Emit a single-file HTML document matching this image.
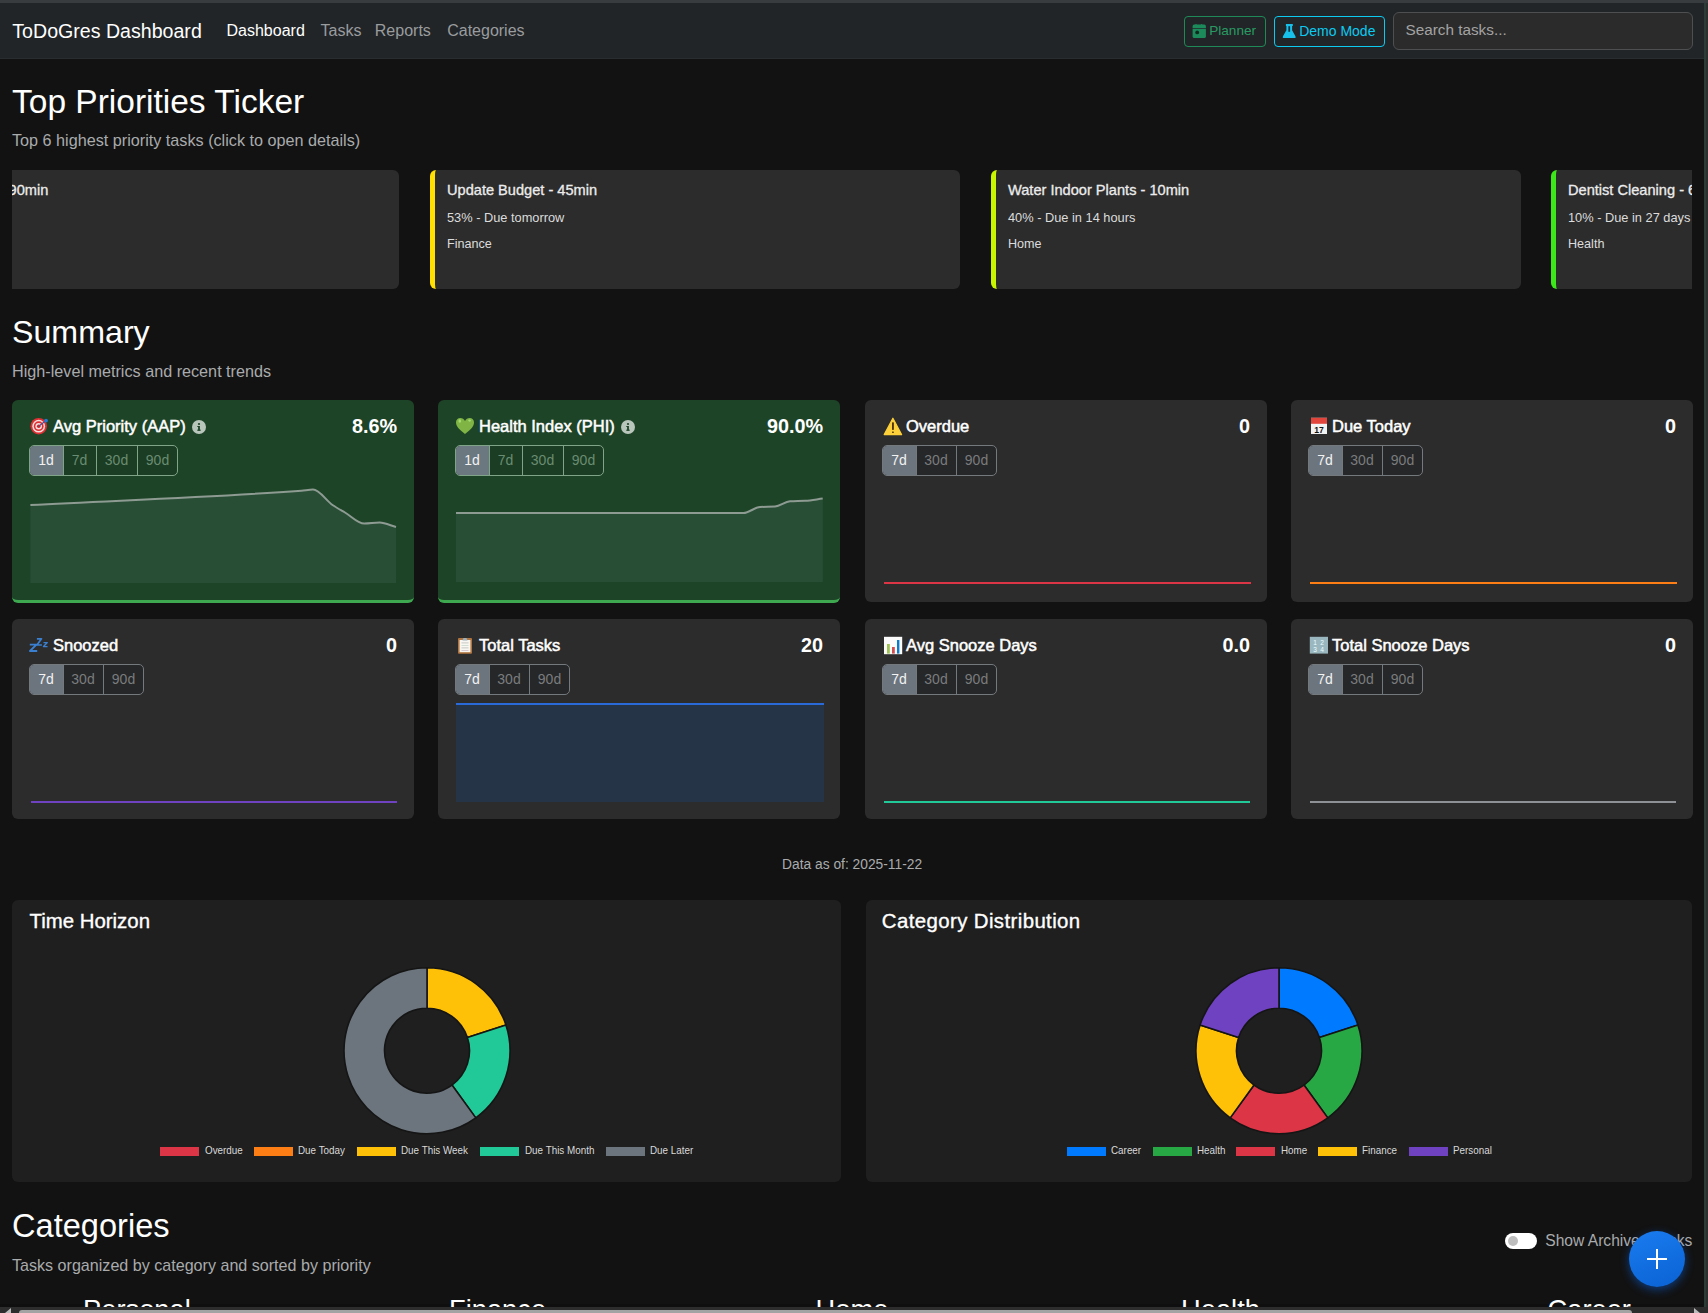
<!DOCTYPE html>
<html><head><meta charset="utf-8"><title>ToDoGres Dashboard</title>
<style>
html,body{margin:0;padding:0;}
body{width:1708px;height:1313px;overflow:hidden;position:relative;background:#121212;font-family:"Liberation Sans", sans-serif;}
.t{position:absolute;white-space:nowrap;line-height:1;font-family:"Liberation Sans", sans-serif;}
</style></head><body>
<div style="position:absolute;left:0px;top:0px;width:1708px;height:3px;background:#383c3e"></div>
<div style="position:absolute;left:0px;top:3px;width:1708px;height:56px;background:#212528"></div>
<div style="position:absolute;left:0px;top:58px;width:1708px;height:1px;background:#2a2d2f"></div>
<div class="t" style="left:12.3px;top:22.0px;font-size:19.6px;color:#fff;font-weight:normal;">ToDoGres Dashboard</div>
<div class="t" style="left:226.5px;top:22.7px;font-size:16px;color:#fff;font-weight:normal;">Dashboard</div>
<div class="t" style="left:320.5px;top:22.7px;font-size:16px;color:#9a9c9e;font-weight:normal;">Tasks</div>
<div class="t" style="left:374.8px;top:22.7px;font-size:16px;color:#9a9c9e;font-weight:normal;">Reports</div>
<div class="t" style="left:447.2px;top:22.7px;font-size:16px;color:#9a9c9e;font-weight:normal;">Categories</div>
<div style="position:absolute;left:1184px;top:16px;width:82px;height:31px;box-sizing:border-box;border:1px solid #1f8a58;border-radius:4px"></div>
<svg style="position:absolute;left:1192px;top:23px" width="15" height="16" viewBox="0 0 15 16"><path d="M0.6 5.2V3.2Q0.6 1.6 2.2 1.6H3Q4 0.6 5 1.6H8.6Q9.6 0.6 10.6 1.6H12.3Q13.9 1.6 13.9 3.2V5.2z" fill="#1d8a5c"/><path d="M0.6 6H13.9V13.4Q13.9 15 12.3 15H2.2Q0.6 15 0.6 13.4z" fill="#1d8a5c"/><circle cx="5.2" cy="9.4" r="1.9" fill="#0f2a1c"/></svg>
<div class="t" style="left:1209.2px;top:23.9px;font-size:13.6px;color:#2a9a63;font-weight:normal;">Planner</div>
<div style="position:absolute;left:1274px;top:16px;width:111px;height:31px;box-sizing:border-box;border:1.5px solid #0dcaf0;border-radius:4px"></div>
<svg style="position:absolute;left:1282px;top:23px" width="15" height="17" viewBox="0 0 15 17"><path d="M3.9 1.1H10.8V3.1H10.1V7.2L13.3 12.9Q14.4 15.1 12.2 15.1H2.2Q0 15.1 1.1 12.9L4.4 7.2V3.1H3.9z" fill="#16c0ea"/><rect x="6.4" y="3.2" width="1.7" height="5.6" fill="#0b2a3a"/></svg>
<div class="t" style="left:1299.2px;top:24.3px;font-size:14px;color:#0dcaf0;font-weight:normal;">Demo Mode</div>
<div style="position:absolute;left:1393px;top:12px;width:300px;height:38px;box-sizing:border-box;background:#2b2b2b;border:1px solid #4d4f51;border-radius:6px"></div>
<div class="t" style="left:1405.5px;top:22.2px;font-size:15.3px;color:#a3a3a3;font-weight:normal;">Search tasks...</div>
<div style="position:absolute;left:1703.5px;top:3px;width:2.5px;height:1304px;background:#2c3d37"></div>
<div style="position:absolute;left:1706px;top:3px;width:2px;height:1304px;background:#2e302f"></div>
<div class="t" style="left:12.0px;top:85.2px;font-size:33.5px;color:#fff;font-weight:normal;">Top Priorities Ticker</div>
<div class="t" style="left:12.0px;top:131.9px;font-size:16.2px;color:#a9abad;font-weight:normal;">Top 6 highest priority tasks (click to open details)</div>
<div style="position:absolute;left:12px;top:168px;width:1680px;height:124px;overflow:hidden">
<div style="position:absolute;left:-143px;top:2px;width:530px;height:119px;background:#2c2c2c;border-radius:6px;box-sizing:border-box;border-left:5px solid #ff7a00"></div>
<div class="t" style="left:-126.0px;top:14.9px;font-size:14.6px;color:#ececec;-webkit-text-stroke:0.3px #ececec"></div>
<div class="t" style="left:-126.0px;top:43.6px;font-size:12.8px;color:#dcdcdc;"></div>
<div class="t" style="left:-126.0px;top:69.7px;font-size:12.6px;color:#dcdcdc;"></div>
<div class="t" style="right:1643.7px;top:14.9px;font-size:14.6px;color:#ececec;-webkit-text-stroke:0.3px #ececec">Finish Project Proposal - 90min</div>
<div style="position:absolute;left:418px;top:2px;width:530px;height:119px;background:#2c2c2c;border-radius:6px;box-sizing:border-box;border-left:5px solid #ffe000"></div>
<div class="t" style="left:435.0px;top:14.9px;font-size:14.6px;color:#ececec;-webkit-text-stroke:0.3px #ececec">Update Budget - 45min</div>
<div class="t" style="left:435.0px;top:43.6px;font-size:12.8px;color:#dcdcdc;">53% - Due tomorrow</div>
<div class="t" style="left:435.0px;top:69.7px;font-size:12.6px;color:#dcdcdc;">Finance</div>
<div style="position:absolute;left:979px;top:2px;width:530px;height:119px;background:#2c2c2c;border-radius:6px;box-sizing:border-box;border-left:5px solid #c8f500"></div>
<div class="t" style="left:996.0px;top:14.9px;font-size:14.6px;color:#ececec;-webkit-text-stroke:0.3px #ececec">Water Indoor Plants - 10min</div>
<div class="t" style="left:996.0px;top:43.6px;font-size:12.8px;color:#dcdcdc;">40% - Due in 14 hours</div>
<div class="t" style="left:996.0px;top:69.7px;font-size:12.6px;color:#dcdcdc;">Home</div>
<div style="position:absolute;left:1539px;top:2px;width:530px;height:119px;background:#2c2c2c;border-radius:6px;box-sizing:border-box;border-left:5px solid #3ce81a"></div>
<div class="t" style="left:1556.0px;top:14.9px;font-size:14.6px;color:#ececec;-webkit-text-stroke:0.3px #ececec">Dentist Cleaning - 60min</div>
<div class="t" style="left:1556.0px;top:43.6px;font-size:12.8px;color:#dcdcdc;">10% - Due in 27 days</div>
<div class="t" style="left:1556.0px;top:69.7px;font-size:12.6px;color:#dcdcdc;">Health</div>
</div>
<div class="t" style="left:12.0px;top:315.5px;font-size:32.2px;color:#fff;font-weight:normal;">Summary</div>
<div class="t" style="left:12.0px;top:363.0px;font-size:16.2px;color:#a9abad;font-weight:normal;">High-level metrics and recent trends</div>
<div style="position:absolute;left:12px;top:400px;width:402px;height:203px;background:#1e4428;border-radius:6px;box-sizing:border-box;border-bottom:3px solid #3ea851"></div>
<svg style="position:absolute;left:12px;top:400px" width="45" height="45" viewBox="0 0 45 45"><circle cx="26.7" cy="26.2" r="8.3" fill="#df2f33"/><circle cx="26.7" cy="26.2" r="6.4" fill="#f6dede"/><circle cx="26.7" cy="26.2" r="4.9" fill="#df2f33"/><circle cx="26.7" cy="26.2" r="3.3" fill="#f6dede"/><circle cx="26.7" cy="26.2" r="1.8" fill="#c8282c"/><path d="M27 26L33.5 21" stroke="#5a4a8a" stroke-width="1.2"/><circle cx="34" cy="20.6" r="1.9" fill="#2a78d0"/></svg>
<div class="t" style="left:53.0px;top:418.0px;font-size:16.5px;color:#fff;font-weight:normal;-webkit-text-stroke:0.5px #fff">Avg Priority (AAP)</div>
<svg style="position:absolute;left:192px;top:420px" width="14" height="14" viewBox="0 0 14 14"><circle cx="7" cy="7" r="7" fill="#b9c6bb"/><rect x="6.1" y="6" width="1.8" height="4.6" fill="#1e4428"/><circle cx="7" cy="4" r="1.1" fill="#1e4428"/><rect x="5.3" y="9.6" width="3.4" height="1.2" fill="#1e4428"/><rect x="5.3" y="6" width="1.8" height="1" fill="#1e4428"/></svg>
<div class="t" style="right:1311.0px;top:416.8px;font-size:19.8px;color:#fff;font-weight:bold;text-align:right;">8.6%</div>
<div style="position:absolute;left:29px;top:445px;width:149px;height:30.5px;box-sizing:border-box;border:1px solid #7fa487;border-radius:5px;overflow:hidden;background:#1b3d23">
<div style="position:absolute;left:-1px;top:-1px;width:35px;height:30.5px;box-sizing:border-box;background:#6c7880;"></div>
<div class="t" style="left:-1px;top:6.8px;width:34px;text-align:center;font-size:14px;color:#f2f2f2">1d</div>
<div style="position:absolute;left:33px;top:-1px;width:34px;height:30.5px;box-sizing:border-box;border-left:1px solid #7fa487;"></div>
<div class="t" style="left:33px;top:6.8px;width:33px;text-align:center;font-size:14px;color:#6a8c72">7d</div>
<div style="position:absolute;left:66px;top:-1px;width:42px;height:30.5px;box-sizing:border-box;border-left:1px solid #7fa487;"></div>
<div class="t" style="left:66px;top:6.8px;width:41px;text-align:center;font-size:14px;color:#6a8c72">30d</div>
<div style="position:absolute;left:107px;top:-1px;width:42px;height:30.5px;box-sizing:border-box;border-left:1px solid #7fa487;"></div>
<div class="t" style="left:107px;top:6.8px;width:41px;text-align:center;font-size:14px;color:#6a8c72">90d</div>
</div>
<svg style="position:absolute;left:0;top:0" width="1708" height="1313"><path d="M30.40,505.00 C120.77,500.23 211.13,497.44 301.50,490.70 C305.33,490.41 309.17,489.60 313.00,489.60 C319.50,489.60 326.00,500.61 332.50,505.00 C336.67,507.81 340.83,510.05 345.00,512.50 C351.43,516.28 357.87,523.60 364.30,523.60 C369.40,523.60 374.50,522.60 379.60,522.60 C385.07,522.60 390.53,525.53 396.00,527.00 L396,583 L30.4,583 Z" fill="rgba(190,230,255,0.065)"/><path d="M30.40,505.00 C120.77,500.23 211.13,497.44 301.50,490.70 C305.33,490.41 309.17,489.60 313.00,489.60 C319.50,489.60 326.00,500.61 332.50,505.00 C336.67,507.81 340.83,510.05 345.00,512.50 C351.43,516.28 357.87,523.60 364.30,523.60 C369.40,523.60 374.50,522.60 379.60,522.60 C385.07,522.60 390.53,525.53 396.00,527.00" fill="none" stroke="#8d9b92" stroke-width="2" stroke-linejoin="round"/></svg>
<div style="position:absolute;left:438px;top:400px;width:402px;height:203px;background:#1e4428;border-radius:6px;box-sizing:border-box;border-bottom:3px solid #3ea851"></div>
<svg style="position:absolute;left:438px;top:400px" width="45" height="45" viewBox="0 0 45 45"><path d="M27 34C21 29.5 18 26.3 18 22.3 18 19.8 19.9 18 22.3 18 24.4 18 26 19.3 27 21 28 19.3 29.6 18 31.7 18 34.1 18 36 19.8 36 22.3 36 26.3 33 29.5 27 34z" fill="#80b545"/><ellipse cx="21.8" cy="21" rx="1.3" ry="1.8" fill="#a6dd74"/><ellipse cx="31.6" cy="20.6" rx="1.4" ry="1.1" fill="#a6dd74"/></svg>
<div class="t" style="left:479.0px;top:418.0px;font-size:16.5px;color:#fff;font-weight:normal;-webkit-text-stroke:0.5px #fff">Health Index (PHI)</div>
<svg style="position:absolute;left:621px;top:420px" width="14" height="14" viewBox="0 0 14 14"><circle cx="7" cy="7" r="7" fill="#b9c6bb"/><rect x="6.1" y="6" width="1.8" height="4.6" fill="#1e4428"/><circle cx="7" cy="4" r="1.1" fill="#1e4428"/><rect x="5.3" y="9.6" width="3.4" height="1.2" fill="#1e4428"/><rect x="5.3" y="6" width="1.8" height="1" fill="#1e4428"/></svg>
<div class="t" style="right:885.0px;top:416.8px;font-size:19.8px;color:#fff;font-weight:bold;text-align:right;">90.0%</div>
<div style="position:absolute;left:455px;top:445px;width:149px;height:30.5px;box-sizing:border-box;border:1px solid #7fa487;border-radius:5px;overflow:hidden;background:#1b3d23">
<div style="position:absolute;left:-1px;top:-1px;width:35px;height:30.5px;box-sizing:border-box;background:#6c7880;"></div>
<div class="t" style="left:-1px;top:6.8px;width:34px;text-align:center;font-size:14px;color:#f2f2f2">1d</div>
<div style="position:absolute;left:33px;top:-1px;width:34px;height:30.5px;box-sizing:border-box;border-left:1px solid #7fa487;"></div>
<div class="t" style="left:33px;top:6.8px;width:33px;text-align:center;font-size:14px;color:#6a8c72">7d</div>
<div style="position:absolute;left:66px;top:-1px;width:42px;height:30.5px;box-sizing:border-box;border-left:1px solid #7fa487;"></div>
<div class="t" style="left:66px;top:6.8px;width:41px;text-align:center;font-size:14px;color:#6a8c72">30d</div>
<div style="position:absolute;left:107px;top:-1px;width:42px;height:30.5px;box-sizing:border-box;border-left:1px solid #7fa487;"></div>
<div class="t" style="left:107px;top:6.8px;width:41px;text-align:center;font-size:14px;color:#6a8c72">90d</div>
</div>
<svg style="position:absolute;left:0;top:0" width="1708" height="1313"><path d="M456.00,513.00 C551.83,513.00 647.67,513.00 743.50,513.00 C749.00,513.00 754.50,507.27 760.00,507.00 C765.00,506.75 770.00,506.85 775.00,506.60 C780.00,506.35 785.00,501.60 790.00,501.30 C795.00,501.00 800.00,501.06 805.00,500.80 C810.90,500.49 816.80,499.33 822.70,498.60 L822.7,582 L456,582 Z" fill="rgba(190,230,255,0.065)"/><path d="M456.00,513.00 C551.83,513.00 647.67,513.00 743.50,513.00 C749.00,513.00 754.50,507.27 760.00,507.00 C765.00,506.75 770.00,506.85 775.00,506.60 C780.00,506.35 785.00,501.60 790.00,501.30 C795.00,501.00 800.00,501.06 805.00,500.80 C810.90,500.49 816.80,499.33 822.70,498.60" fill="none" stroke="#8d9b92" stroke-width="2" stroke-linejoin="round"/></svg>
<div style="position:absolute;left:865px;top:400px;width:402px;height:202px;background:#2c2c2c;border-radius:6px"></div>
<svg style="position:absolute;left:865px;top:400px" width="45" height="45" viewBox="0 0 45 45"><path d="M27.9 18.2L36.6 34.6H19.2z" fill="#fcd03a" stroke="#fcd03a" stroke-linejoin="round" stroke-width="1.2"/><rect x="27.1" y="22.3" width="1.7" height="7.6" rx="0.6" fill="#3a2200"/><rect x="27.1" y="31.4" width="1.7" height="1.5" rx="0.6" fill="#3a2200"/></svg>
<div class="t" style="left:906.0px;top:418.0px;font-size:16.5px;color:#fff;font-weight:normal;-webkit-text-stroke:0.5px #fff">Overdue</div>
<div class="t" style="right:458.0px;top:416.8px;font-size:19.8px;color:#fff;font-weight:bold;text-align:right;">0</div>
<div style="position:absolute;left:882px;top:445px;width:115px;height:30.5px;box-sizing:border-box;border:1px solid #74797d;border-radius:5px;overflow:hidden;background:#262728">
<div style="position:absolute;left:-1px;top:-1px;width:35px;height:30.5px;box-sizing:border-box;background:#6c757d;"></div>
<div class="t" style="left:-1px;top:6.8px;width:34px;text-align:center;font-size:14px;color:#f2f2f2">7d</div>
<div style="position:absolute;left:33px;top:-1px;width:41px;height:30.5px;box-sizing:border-box;border-left:1px solid #74797d;"></div>
<div class="t" style="left:33px;top:6.8px;width:40px;text-align:center;font-size:14px;color:#7a7c7e">30d</div>
<div style="position:absolute;left:73px;top:-1px;width:42px;height:30.5px;box-sizing:border-box;border-left:1px solid #74797d;"></div>
<div class="t" style="left:73px;top:6.8px;width:41px;text-align:center;font-size:14px;color:#7a7c7e">90d</div>
</div>
<div style="position:absolute;left:883.5px;top:581.9px;width:367px;height:2.2px;background:#dc3545"></div>
<div style="position:absolute;left:1291px;top:400px;width:402px;height:202px;background:#2c2c2c;border-radius:6px"></div>
<svg style="position:absolute;left:1291px;top:400px" width="45" height="45" viewBox="0 0 45 45"><rect x="20" y="17.8" width="16" height="16.2" fill="#f2f2f2"/><rect x="20" y="17.8" width="16" height="6" fill="#e2453c"/><text x="28" y="32.6" font-size="8.6" text-anchor="middle" font-family="Liberation Sans" font-weight="bold" fill="#111">17</text></svg>
<div class="t" style="left:1332.0px;top:418.0px;font-size:16.5px;color:#fff;font-weight:normal;-webkit-text-stroke:0.5px #fff">Due Today</div>
<div class="t" style="right:32.0px;top:416.8px;font-size:19.8px;color:#fff;font-weight:bold;text-align:right;">0</div>
<div style="position:absolute;left:1308px;top:445px;width:115px;height:30.5px;box-sizing:border-box;border:1px solid #74797d;border-radius:5px;overflow:hidden;background:#262728">
<div style="position:absolute;left:-1px;top:-1px;width:35px;height:30.5px;box-sizing:border-box;background:#6c757d;"></div>
<div class="t" style="left:-1px;top:6.8px;width:34px;text-align:center;font-size:14px;color:#f2f2f2">7d</div>
<div style="position:absolute;left:33px;top:-1px;width:41px;height:30.5px;box-sizing:border-box;border-left:1px solid #74797d;"></div>
<div class="t" style="left:33px;top:6.8px;width:40px;text-align:center;font-size:14px;color:#7a7c7e">30d</div>
<div style="position:absolute;left:73px;top:-1px;width:42px;height:30.5px;box-sizing:border-box;border-left:1px solid #74797d;"></div>
<div class="t" style="left:73px;top:6.8px;width:41px;text-align:center;font-size:14px;color:#7a7c7e">90d</div>
</div>
<div style="position:absolute;left:1309.5px;top:581.9px;width:367px;height:2.2px;background:#fd7e14"></div>
<div style="position:absolute;left:12px;top:619px;width:402px;height:200px;background:#2c2c2c;border-radius:6px"></div>
<svg style="position:absolute;left:12px;top:619px" width="45" height="45" viewBox="0 0 45 45"><path d="M17.8 25.6h6.6l-6.4 6.4h7.2" stroke="#3a7fd0" stroke-width="1.9" fill="none" stroke-linejoin="round"/><path d="M24.9 19.8h4.6l-4.6 6.2h5" stroke="#3a7fd0" stroke-width="1.7" fill="none" stroke-linejoin="round"/><path d="M31.5 23.6h3.8l-3.8 4h4" stroke="#3a7fd0" stroke-width="1.4" fill="none" stroke-linejoin="round"/></svg>
<div class="t" style="left:53.0px;top:637.0px;font-size:16.5px;color:#fff;font-weight:normal;-webkit-text-stroke:0.5px #fff">Snoozed</div>
<div class="t" style="right:1311.0px;top:635.8px;font-size:19.8px;color:#fff;font-weight:bold;text-align:right;">0</div>
<div style="position:absolute;left:29px;top:664px;width:115px;height:30.5px;box-sizing:border-box;border:1px solid #74797d;border-radius:5px;overflow:hidden;background:#262728">
<div style="position:absolute;left:-1px;top:-1px;width:35px;height:30.5px;box-sizing:border-box;background:#6c757d;"></div>
<div class="t" style="left:-1px;top:6.8px;width:34px;text-align:center;font-size:14px;color:#f2f2f2">7d</div>
<div style="position:absolute;left:33px;top:-1px;width:41px;height:30.5px;box-sizing:border-box;border-left:1px solid #74797d;"></div>
<div class="t" style="left:33px;top:6.8px;width:40px;text-align:center;font-size:14px;color:#7a7c7e">30d</div>
<div style="position:absolute;left:73px;top:-1px;width:42px;height:30.5px;box-sizing:border-box;border-left:1px solid #74797d;"></div>
<div class="t" style="left:73px;top:6.8px;width:41px;text-align:center;font-size:14px;color:#7a7c7e">90d</div>
</div>
<div style="position:absolute;left:30.5px;top:800.9px;width:366.5px;height:2.2px;background:#6f42c1"></div>
<div style="position:absolute;left:438px;top:619px;width:402px;height:200px;background:#2c2c2c;border-radius:6px"></div>
<svg style="position:absolute;left:438px;top:619px" width="45" height="45" viewBox="0 0 45 45"><rect x="20" y="19" width="14" height="15.8" rx="1" fill="#b0743e"/><rect x="21.6" y="21" width="10.8" height="12.2" fill="#f8f6f0"/><path d="M24.5 21.5h5l-1-2.5h-3z" fill="#9ab0bf"/><rect x="23.5" y="23.5" width="7" height="0.8" fill="#bbb"/><rect x="23.5" y="26" width="7" height="0.8" fill="#c8d8cc"/><rect x="23.5" y="28.5" width="7" height="0.8" fill="#bbb"/><rect x="23.5" y="31" width="7" height="0.8" fill="#d0c0c8"/></svg>
<div class="t" style="left:479.0px;top:637.0px;font-size:16.5px;color:#fff;font-weight:normal;-webkit-text-stroke:0.5px #fff">Total Tasks</div>
<div class="t" style="right:885.0px;top:635.8px;font-size:19.8px;color:#fff;font-weight:bold;text-align:right;">20</div>
<div style="position:absolute;left:455px;top:664px;width:115px;height:30.5px;box-sizing:border-box;border:1px solid #74797d;border-radius:5px;overflow:hidden;background:#262728">
<div style="position:absolute;left:-1px;top:-1px;width:35px;height:30.5px;box-sizing:border-box;background:#6c757d;"></div>
<div class="t" style="left:-1px;top:6.8px;width:34px;text-align:center;font-size:14px;color:#f2f2f2">7d</div>
<div style="position:absolute;left:33px;top:-1px;width:41px;height:30.5px;box-sizing:border-box;border-left:1px solid #74797d;"></div>
<div class="t" style="left:33px;top:6.8px;width:40px;text-align:center;font-size:14px;color:#7a7c7e">30d</div>
<div style="position:absolute;left:73px;top:-1px;width:42px;height:30.5px;box-sizing:border-box;border-left:1px solid #74797d;"></div>
<div class="t" style="left:73px;top:6.8px;width:41px;text-align:center;font-size:14px;color:#7a7c7e">90d</div>
</div>
<div style="position:absolute;left:456px;top:704px;width:368px;height:98px;background:#263447"></div>
<div style="position:absolute;left:456px;top:702.6px;width:368px;height:2.4px;background:#2a6ad8"></div>
<div style="position:absolute;left:865px;top:619px;width:402px;height:200px;background:#2c2c2c;border-radius:6px"></div>
<svg style="position:absolute;left:865px;top:619px" width="45" height="45" viewBox="0 0 45 45"><rect x="19" y="17.8" width="18.2" height="17.4" fill="#fbfbfb"/><rect x="22" y="25" width="2.8" height="9.6" fill="#9ec254"/><rect x="27" y="28" width="2.8" height="6.6" fill="#d05050"/><rect x="32" y="21" width="2.4" height="13.6" fill="#0a7ccc"/></svg>
<div class="t" style="left:906.0px;top:637.0px;font-size:16.5px;color:#fff;font-weight:normal;-webkit-text-stroke:0.5px #fff">Avg Snooze Days</div>
<div class="t" style="right:458.0px;top:635.8px;font-size:19.8px;color:#fff;font-weight:bold;text-align:right;">0.0</div>
<div style="position:absolute;left:882px;top:664px;width:115px;height:30.5px;box-sizing:border-box;border:1px solid #74797d;border-radius:5px;overflow:hidden;background:#262728">
<div style="position:absolute;left:-1px;top:-1px;width:35px;height:30.5px;box-sizing:border-box;background:#6c757d;"></div>
<div class="t" style="left:-1px;top:6.8px;width:34px;text-align:center;font-size:14px;color:#f2f2f2">7d</div>
<div style="position:absolute;left:33px;top:-1px;width:41px;height:30.5px;box-sizing:border-box;border-left:1px solid #74797d;"></div>
<div class="t" style="left:33px;top:6.8px;width:40px;text-align:center;font-size:14px;color:#7a7c7e">30d</div>
<div style="position:absolute;left:73px;top:-1px;width:42px;height:30.5px;box-sizing:border-box;border-left:1px solid #74797d;"></div>
<div class="t" style="left:73px;top:6.8px;width:41px;text-align:center;font-size:14px;color:#7a7c7e">90d</div>
</div>
<div style="position:absolute;left:883.5px;top:800.9px;width:366.5px;height:2.2px;background:#20c997"></div>
<div style="position:absolute;left:1291px;top:619px;width:402px;height:200px;background:#2c2c2c;border-radius:6px"></div>
<svg style="position:absolute;left:1291px;top:619px" width="45" height="45" viewBox="0 0 45 45"><rect x="18.8" y="17.8" width="18.2" height="16.8" fill="#9ab6bf"/><text x="24.2" y="25.5" font-size="6.6" text-anchor="middle" font-family="Liberation Sans" fill="#eaffff">1</text><text x="31.2" y="25.5" font-size="6.6" text-anchor="middle" font-family="Liberation Sans" fill="#eaffff">2</text><text x="24.2" y="32.5" font-size="6.6" text-anchor="middle" font-family="Liberation Sans" fill="#eaffff">3</text><text x="31.2" y="32.5" font-size="6.6" text-anchor="middle" font-family="Liberation Sans" fill="#eaffff">4</text></svg>
<div class="t" style="left:1332.0px;top:637.0px;font-size:16.5px;color:#fff;font-weight:normal;-webkit-text-stroke:0.5px #fff">Total Snooze Days</div>
<div class="t" style="right:32.0px;top:635.8px;font-size:19.8px;color:#fff;font-weight:bold;text-align:right;">0</div>
<div style="position:absolute;left:1308px;top:664px;width:115px;height:30.5px;box-sizing:border-box;border:1px solid #74797d;border-radius:5px;overflow:hidden;background:#262728">
<div style="position:absolute;left:-1px;top:-1px;width:35px;height:30.5px;box-sizing:border-box;background:#6c757d;"></div>
<div class="t" style="left:-1px;top:6.8px;width:34px;text-align:center;font-size:14px;color:#f2f2f2">7d</div>
<div style="position:absolute;left:33px;top:-1px;width:41px;height:30.5px;box-sizing:border-box;border-left:1px solid #74797d;"></div>
<div class="t" style="left:33px;top:6.8px;width:40px;text-align:center;font-size:14px;color:#7a7c7e">30d</div>
<div style="position:absolute;left:73px;top:-1px;width:42px;height:30.5px;box-sizing:border-box;border-left:1px solid #74797d;"></div>
<div class="t" style="left:73px;top:6.8px;width:41px;text-align:center;font-size:14px;color:#7a7c7e">90d</div>
</div>
<div style="position:absolute;left:1309.5px;top:800.9px;width:366.5px;height:2.2px;background:#8e9296"></div>
<div class="t" style="left:782.0px;top:857.8px;font-size:13.8px;color:#a9abad;font-weight:normal;">Data as of: 2025-11-22</div>
<div style="position:absolute;left:12px;top:900px;width:828.5px;height:282px;background:#1f1f1f;border-radius:6px"></div>
<div style="position:absolute;left:866px;top:900px;width:826px;height:282px;background:#1f1f1f;border-radius:6px"></div>
<div class="t" style="left:29.5px;top:910.5px;font-size:20.4px;color:#fff;font-weight:normal;-webkit-text-stroke:0.35px #fff">Time Horizon</div>
<div class="t" style="left:881.8px;top:910.5px;font-size:20.4px;color:#fff;font-weight:normal;letter-spacing:0.4px;-webkit-text-stroke:0.35px #fff">Category Distribution</div>
<svg style="position:absolute;left:0;top:0" width="1708" height="1313"><path d="M427.00,967.70 A83,83 0 0 1 505.94,1025.05 L467.42,1037.57 A42.5,42.5 0 0 0 427.00,1008.20 Z" fill="#ffc107" stroke="#151515" stroke-width="1.6" stroke-linejoin="round"/><path d="M505.94,1025.05 A83,83 0 0 1 475.79,1117.85 L451.98,1085.08 A42.5,42.5 0 0 0 467.42,1037.57 Z" fill="#20c997" stroke="#151515" stroke-width="1.6" stroke-linejoin="round"/><path d="M475.79,1117.85 A83,83 0 1 1 427.00,967.70 L427.00,1008.20 A42.5,42.5 0 1 0 451.98,1085.08 Z" fill="#6c757d" stroke="#151515" stroke-width="1.6" stroke-linejoin="round"/></svg>
<svg style="position:absolute;left:0;top:0" width="1708" height="1313"><path d="M1279.00,967.70 A83,83 0 0 1 1357.94,1025.05 L1319.42,1037.57 A42.5,42.5 0 0 0 1279.00,1008.20 Z" fill="#007bff" stroke="#151515" stroke-width="1.6" stroke-linejoin="round"/><path d="M1357.94,1025.05 A83,83 0 0 1 1327.79,1117.85 L1303.98,1085.08 A42.5,42.5 0 0 0 1319.42,1037.57 Z" fill="#28a745" stroke="#151515" stroke-width="1.6" stroke-linejoin="round"/><path d="M1327.79,1117.85 A83,83 0 0 1 1230.21,1117.85 L1254.02,1085.08 A42.5,42.5 0 0 0 1303.98,1085.08 Z" fill="#dc3545" stroke="#151515" stroke-width="1.6" stroke-linejoin="round"/><path d="M1230.21,1117.85 A83,83 0 0 1 1200.06,1025.05 L1238.58,1037.57 A42.5,42.5 0 0 0 1254.02,1085.08 Z" fill="#ffc107" stroke="#151515" stroke-width="1.6" stroke-linejoin="round"/><path d="M1200.06,1025.05 A83,83 0 0 1 1279.00,967.70 L1279.00,1008.20 A42.5,42.5 0 0 0 1238.58,1037.57 Z" fill="#6f42c1" stroke="#151515" stroke-width="1.6" stroke-linejoin="round"/></svg>
<div style="position:absolute;left:160px;top:1147px;width:39px;height:8.5px;background:#dc3545"></div>
<div class="t" style="left:204.5px;top:1145.1px;font-size:10.6px;color:#d9d9d9;font-weight:normal;transform:scaleX(0.93);transform-origin:0 0">Overdue</div>
<div style="position:absolute;left:254px;top:1147px;width:39px;height:8.5px;background:#fd7e14"></div>
<div class="t" style="left:298.3px;top:1145.1px;font-size:10.6px;color:#d9d9d9;font-weight:normal;transform:scaleX(0.93);transform-origin:0 0">Due Today</div>
<div style="position:absolute;left:357px;top:1147px;width:39px;height:8.5px;background:#ffc107"></div>
<div class="t" style="left:401.0px;top:1145.1px;font-size:10.6px;color:#d9d9d9;font-weight:normal;transform:scaleX(0.93);transform-origin:0 0">Due This Week</div>
<div style="position:absolute;left:479.8px;top:1147px;width:39px;height:8.5px;background:#20c997"></div>
<div class="t" style="left:524.6px;top:1145.1px;font-size:10.6px;color:#d9d9d9;font-weight:normal;transform:scaleX(0.93);transform-origin:0 0">Due This Month</div>
<div style="position:absolute;left:605.7px;top:1147px;width:39px;height:8.5px;background:#6c757d"></div>
<div class="t" style="left:650.2px;top:1145.1px;font-size:10.6px;color:#d9d9d9;font-weight:normal;transform:scaleX(0.93);transform-origin:0 0">Due Later</div>
<div style="position:absolute;left:1066.6px;top:1147px;width:39px;height:8.5px;background:#007bff"></div>
<div class="t" style="left:1111.4px;top:1145.1px;font-size:10.6px;color:#d9d9d9;font-weight:normal;transform:scaleX(0.93);transform-origin:0 0">Career</div>
<div style="position:absolute;left:1152.5px;top:1147px;width:39px;height:8.5px;background:#28a745"></div>
<div class="t" style="left:1196.7px;top:1145.1px;font-size:10.6px;color:#d9d9d9;font-weight:normal;transform:scaleX(0.93);transform-origin:0 0">Health</div>
<div style="position:absolute;left:1236.3px;top:1147px;width:39px;height:8.5px;background:#dc3545"></div>
<div class="t" style="left:1280.5px;top:1145.1px;font-size:10.6px;color:#d9d9d9;font-weight:normal;transform:scaleX(0.93);transform-origin:0 0">Home</div>
<div style="position:absolute;left:1318.2px;top:1147px;width:39px;height:8.5px;background:#ffc107"></div>
<div class="t" style="left:1362.4px;top:1145.1px;font-size:10.6px;color:#d9d9d9;font-weight:normal;transform:scaleX(0.93);transform-origin:0 0">Finance</div>
<div style="position:absolute;left:1408.8px;top:1147px;width:39px;height:8.5px;background:#6f42c1"></div>
<div class="t" style="left:1453.3px;top:1145.1px;font-size:10.6px;color:#d9d9d9;font-weight:normal;transform:scaleX(0.93);transform-origin:0 0">Personal</div>
<div class="t" style="left:12.0px;top:1209.6px;font-size:32.6px;color:#fff;font-weight:normal;">Categories</div>
<div class="t" style="left:12.0px;top:1256.8px;font-size:16.1px;color:#a9abad;font-weight:normal;">Tasks organized by category and sorted by priority</div>
<div style="position:absolute;left:1505px;top:1233px;width:32px;height:16px;box-sizing:border-box;background:#fff;border-radius:8px"></div>
<div style="position:absolute;left:1507.7px;top:1236px;width:10px;height:10px;background:#bdbdbd;border-radius:50%"></div>
<div class="t" style="left:1545.3px;top:1233.0px;font-size:15.6px;color:#a9abad;font-weight:normal;">Show Archived Tasks</div>
<div style="position:absolute;left:0;top:1280px;width:1703px;height:27.2px;overflow:hidden;z-index:2">
<div class="t" style="left:83px;top:16.3px;font-size:27.3px;color:#fff">Personal</div>
<div class="t" style="left:449px;top:16.3px;font-size:27.3px;color:#fff">Finance</div>
<div class="t" style="left:815.5px;top:16.3px;font-size:27.3px;color:#fff">Home</div>
<div class="t" style="left:1181px;top:16.3px;font-size:27.3px;color:#fff">Health</div>
<div class="t" style="left:1547.5px;top:16.3px;font-size:27.3px;color:#fff">Career</div>
</div>
<div style="position:absolute;left:1629px;top:1231px;width:56px;height:56px;border-radius:50%;background:linear-gradient(160deg,#1a7cf0,#0a62d2);box-shadow:0 3px 10px rgba(13,110,253,0.45);z-index:3"></div>
<div style="position:absolute;left:1647px;top:1257.8px;width:20px;height:2.6px;background:#fff;z-index:4"></div>
<div style="position:absolute;left:1655.7px;top:1249px;width:2.6px;height:20px;background:#fff;z-index:4"></div>
<div style="position:absolute;left:0px;top:1304px;width:1703px;height:3px;background:#0f0f0f"></div>
<div style="position:absolute;left:0px;top:1307px;width:1708px;height:6px;background:#2d2d2d"></div>
<div style="position:absolute;left:19px;top:1309.5px;width:1613px;height:4px;background:#a3a3a3;border-radius:3px 3px 0 0"></div>
<svg style="position:absolute;left:4px;top:1308px" width="8" height="6"><path d="M7 0L1 5L7 6z" fill="#bbb"/></svg>
<svg style="position:absolute;left:1693px;top:1308px" width="8" height="6"><path d="M1 0L7 5L1 6z" fill="#bbb"/></svg>
</body></html>
